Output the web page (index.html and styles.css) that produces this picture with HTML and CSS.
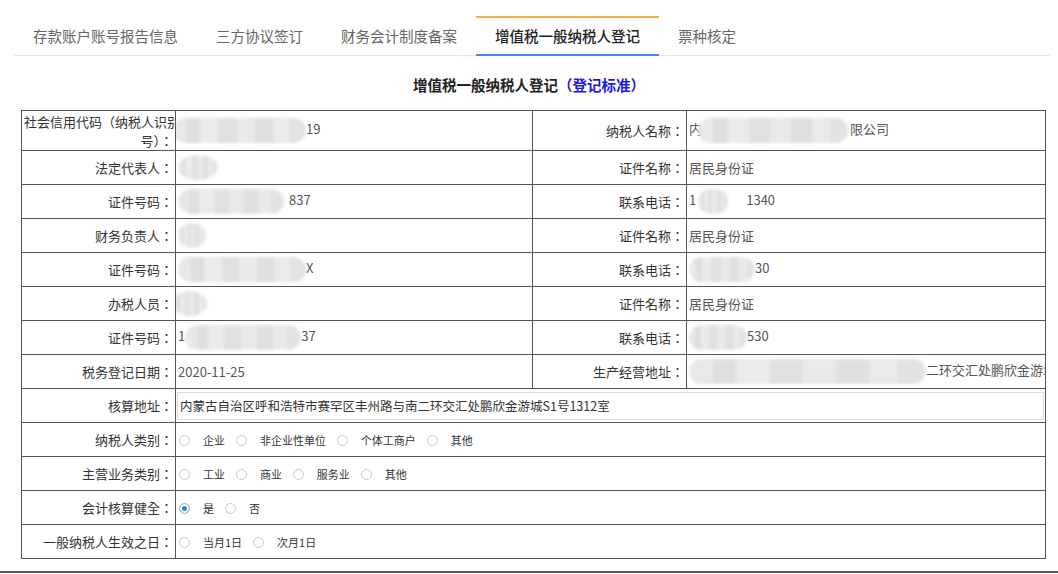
FILE: index.html
```html
<!DOCTYPE html>
<html>
<head>
<meta charset="utf-8">
<title>增值税一般纳税人登记</title>
<link rel="stylesheet" href="styles.css">
</head>
<body>
<div class="tabs">
    <a class="tab">存款账户账号报告信息</a>
    <a class="tab">三方协议签订</a>
    <a class="tab">财务会计制度备案</a>
    <a class="tab active">增值税一般纳税人登记</a>
    <a class="tab">票种核定</a>
</div>

<h3 class="title">增值税一般纳税人登记<a class="std">（登记标准）</a></h3>

<table class="form">
    <colgroup>
        <col class="c-label">
        <col class="c-value">
        <col class="c-label">
        <col class="c-value2">
    </colgroup>
    <tr class="tall">
        <th class="wrap">社会信用代码（纳税人识别<br>号）：</th>
        <td><span class="blob w133 lead"></span>19</td>
        <th>纳税人名称：</th>
        <td>内<span class="blob w150 cover"></span>限公司</td>
    </tr>
    <tr>
        <th>法定代表人：</th>
        <td><span class="blob w40 round"></span></td>
        <th>证件名称：</th>
        <td>居民身份证</td>
    </tr>
    <tr>
        <th>证件号码：</th>
        <td><span class="blob w106 gap"></span>837</td>
        <th>联系电话：</th>
        <td>1<span class="blob w30 gap18"></span>1340</td>
    </tr>
    <tr>
        <th>财务负责人：</th>
        <td><span class="blob w28 round"></span></td>
        <th>证件名称：</th>
        <td>居民身份证</td>
    </tr>
    <tr>
        <th>证件号码：</th>
        <td><span class="blob w128"></span>X</td>
        <th>联系电话：</th>
        <td><span class="blob w66"></span>30</td>
    </tr>
    <tr>
        <th>办税人员：</th>
        <td><span class="blob w34 lead round"></span></td>
        <th>证件名称：</th>
        <td>居民身份证</td>
    </tr>
    <tr>
        <th>证件号码：</th>
        <td>1<span class="blob w116"></span>37</td>
        <th>联系电话：</th>
        <td><span class="blob w58"></span>530</td>
    </tr>
    <tr>
        <th>税务登记日期：</th>
        <td>2020-11-25</td>
        <th>生产经营地址：</th>
        <td class="clip"><span class="blob w237"></span>二环交汇处鹏欣金游城</td>
    </tr>
    <tr>
        <th>核算地址：</th>
        <td colspan="3" class="addr"><input class="addr-input" type="text" value="内蒙古自治区呼和浩特市赛罕区丰州路与南二环交汇处鹏欣金游城S1号1312室"></td>
    </tr>
    <tr>
        <th>纳税人类别：</th>
        <td colspan="3">
            <span class="radio"></span><span class="opt">企业</span>
            <span class="radio"></span><span class="opt">非企业性单位</span>
            <span class="radio"></span><span class="opt">个体工商户</span>
            <span class="radio"></span><span class="opt">其他</span>
        </td>
    </tr>
    <tr>
        <th>主营业务类别：</th>
        <td colspan="3">
            <span class="radio"></span><span class="opt">工业</span>
            <span class="radio"></span><span class="opt">商业</span>
            <span class="radio"></span><span class="opt">服务业</span>
            <span class="radio"></span><span class="opt">其他</span>
        </td>
    </tr>
    <tr>
        <th>会计核算健全：</th>
        <td colspan="3">
            <span class="radio checked"></span><span class="opt">是</span>
            <span class="radio"></span><span class="opt">否</span>
        </td>
    </tr>
    <tr>
        <th>一般纳税人生效之日：</th>
        <td colspan="3">
            <span class="radio"></span><span class="opt">当月1日</span>
            <span class="radio"></span><span class="opt">次月1日</span>
        </td>
    </tr>
</table>

<div class="bottom-line"></div>
</body>
</html>
```

FILE: styles.css
```css
body{
	margin:0;
	background:#fff;
	font-family:"Noto Sans CJK SC", "Liberation Sans", sans-serif;
	color:#333;
}

/* 顶部标签页 */
.tabs{
	display:flex;
	margin:16px 8px 0 14px;
	border-bottom:1px solid #e6e6e6;
}
.tab{
	padding:0 19px;
	height:36px;
	line-height:36px;
	font-size:14.5px;
	color:#666;
	border-top:2px solid transparent;
	border-bottom:2px solid transparent;
	margin-bottom:-1px;
	white-space:nowrap;
}
.tab.active{
	color:#222;
	font-weight:500;
	border-top-color:#f5b140;
	border-bottom-color:#4a86e8;
}

/* 标题 */
.title{
	margin:19px 0 15px;
	text-align:center;
	font-size:14.5px;
	line-height:20px;
	font-weight:bold;
	color:#222;
}
.title .std{
	color:#1b1be0;
	font-family:"Noto Sans CJK TC", sans-serif;
}

/* 表单表格 */
.form{
	margin-left:21px;
	width:1024px;
	table-layout:fixed;
	border-collapse:collapse;
	border:1px solid #666;
}
.c-label{ width:154px; }
.c-value{ width:357px; }
.c-value2{ width:359px; }

.form th, .form td{
	border:1px solid #555;
	height:33px;
	padding:0 2px;
	font-size:13px;
	line-height:19px;
	overflow:hidden;
	white-space:nowrap;
}
.form th{
	font-weight:normal;
	text-align:right;
	color:#333;
	/* 冒号居中显示 */
	font-family:"Noto Sans CJK TC", sans-serif;
}
.form td{
	text-align:left;
	color:#555;
}
.form tr.tall th, .form tr.tall td{ height:39px; }
.form th.wrap{ text-align:right; }

/* 打码区域 */
.blob{
	display:inline-block;
	height:25px;
	vertical-align:middle;
	border-radius:13px;
	background:linear-gradient(90deg, #e8e8e8 0, #e8e8e8 10%, #dedede 10%, #dedede 20%, #ebebeb 20%, #ebebeb 34%, #e0e0e0 34%, #e0e0e0 48%, #e9e9e9 48%, #e9e9e9 62%, #dfdfdf 62%, #dfdfdf 76%, #eaeaea 76%, #eaeaea 88%, #e2e2e2 88%);
	filter:blur(1.5px);
}
.blob.round{ border-radius:50%; }
.blob.lead{ margin-left:-5px; }
.blob.cover{ margin-left:-4px; margin-right:2px; }
.blob.gap{ margin-right:5px; }
.blob.gap18{ margin-right:18px; margin-left:2px; }
.w28{ width:28px; }
.w30{ width:30px; }
.w34{ width:34px; }
.w40{ width:40px; }
.w58{ width:58px; }
.w66{ width:66px; }
.w106{ width:106px; }
.w116{ width:116px; }
.w128{ width:128px; }
.w133{ width:133px; }
.w150{ width:150px; }
.w237{ width:237px; }

.form td.clip{ text-overflow:clip; }

/* 核算地址输入框 */
.form td.addr{ padding:0 1px; }
.addr-input{
	display:block;
	width:100%;
	height:28px;
	box-sizing:border-box;
	margin:0;
	padding:0 2px;
	border:1px solid #dcdcdc;
	font-family:inherit;
	font-size:12.5px;
	color:#333;
	outline:none;
}

/* 单选框 */
.radio{
	display:inline-block;
	width:11px;
	height:11px;
	box-sizing:border-box;
	border:1px solid #c9c9c9;
	border-radius:50%;
	vertical-align:middle;
	margin:0 13px 0 1px;
	background:#fff;
}
.radio.checked{
	border-color:#bdbdbd;
	background:#1a8fe3;
	box-shadow:inset 0 0 0 2px #fff;
}
.opt{
	display:inline-block;
	font-size:11px;
	color:#333;
	vertical-align:middle;
	margin-right:7px;
}

.bottom-line{
	margin-top:12px;
	border-top:2px solid #555;
}
```
